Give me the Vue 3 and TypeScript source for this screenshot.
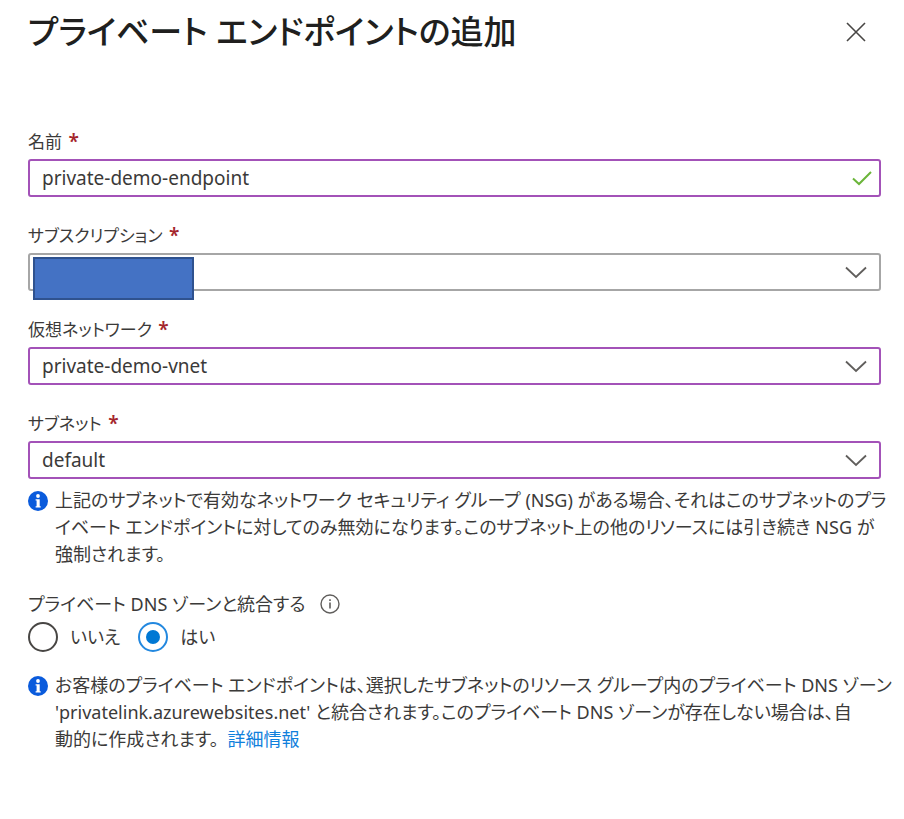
<script setup lang="ts">
import { reactive, ref } from 'vue'

interface SelectField {
  id: string
  label: string
  value: string
  edited: boolean
  masked: boolean
}

const name = ref('private-demo-endpoint')
const dnsIntegration = ref<'no' | 'yes'>('yes')

const selects = reactive<SelectField[]>([
  { id: 'subscription', label: 'サブスクリプション', value: '', edited: false, masked: true },
  { id: 'vnet', label: '仮想ネットワーク', value: 'private-demo-vnet', edited: true, masked: false },
  { id: 'subnet', label: 'サブネット', value: 'default', edited: true, masked: false },
])
</script>

<template>
  <main class="panel">
    <header class="header">
      <h1 class="title">プライベート エンドポイントの追加</h1>
      <button class="close" type="button" aria-label="閉じる">
        <svg width="20" height="20" viewBox="0 0 20 20" aria-hidden="true">
          <path d="M1 1 19 19M19 1 1 19" fill="none" stroke="#484644" stroke-width="1.6" />
        </svg>
      </button>
    </header>

    <form class="form" @submit.prevent>
      <div class="field">
        <label class="label" for="name">名前 <span class="required">*</span></label>
        <div class="control">
          <input id="name" v-model="name" class="box edited" type="text" required />
          <svg class="mark" width="22" height="22" viewBox="0 0 22 22" aria-hidden="true">
            <path d="M2 11.5 8 17 20 5" fill="none" stroke="#6bb53a" stroke-width="2" />
          </svg>
        </div>
      </div>

      <div v-for="field in selects" :key="field.id" class="field">
        <label class="label" :for="field.id">{{ field.label }} <span class="required">*</span></label>
        <div class="control">
          <select :id="field.id" v-model="field.value" class="box" :class="{ edited: field.edited }" required>
            <option :value="field.value">{{ field.value }}</option>
          </select>
          <svg class="mark" width="22" height="22" viewBox="0 0 22 22" aria-hidden="true">
            <path d="M1 6.500 11 16 21 6.500" fill="none" stroke="#605e5c" stroke-width="1.8" />
          </svg>
          <span v-if="field.masked" class="mask"></span>
        </div>
      </div>

      <div class="note">
        <svg class="note-icon" width="20" height="20" viewBox="0 0 20 20" aria-hidden="true">
          <circle cx="10" cy="10" r="10" fill="#0a5bdc" />
          <circle cx="10" cy="5" r="1.900" fill="#fff" />
          <path d="M7.600 8.200h4.100v7h1v1.300H7.600v-1.300h1V9.500h-1z" fill="#fff" />
        </svg>
        <p class="note-text">
          上記のサブネットで有効なネットワーク セキュリティ グループ (NSG) がある場合、それはこのサブネットのプラ<br />イベート エンドポイントに対してのみ無効になります。このサブネット上の他のリソースには引き続き NSG が<br />強制されます。
        </p>
      </div>

      <fieldset class="dns">
        <legend class="label dns-label">
          プライベート DNS ゾーンと統合する
          <svg class="hint" width="20" height="20" viewBox="0 0 20 20" aria-hidden="true">
            <circle cx="10" cy="10" r="9" fill="none" stroke="#605e5c" stroke-width="1.400" />
            <path d="M10 8.500v6M10 5.200v1.800" fill="none" stroke="#605e5c" stroke-width="1.600" />
          </svg>
        </legend>
        <div class="choices">
          <label class="choice"><input v-model="dnsIntegration" class="radio" type="radio" name="dns" value="no" />いいえ</label>
          <label class="choice"><input v-model="dnsIntegration" class="radio" type="radio" name="dns" value="yes" />はい</label>
        </div>
      </fieldset>

      <div class="note">
        <svg class="note-icon" width="20" height="20" viewBox="0 0 20 20" aria-hidden="true">
          <circle cx="10" cy="10" r="10" fill="#0a5bdc" />
          <circle cx="10" cy="5" r="1.900" fill="#fff" />
          <path d="M7.600 8.200h4.100v7h1v1.300H7.600v-1.300h1V9.500h-1z" fill="#fff" />
        </svg>
        <p class="note-text">
          お客様のプライベート エンドポイントは、選択したサブネットのリソース グループ内のプライベート DNS ゾーン<br />'privatelink.azurewebsites.net' と統合されます。このプライベート DNS ゾーンが存在しない場合は、自<br />動的に作成されます。<a class="link" href="#">詳細情報</a>
        </p>
      </div>
    </form>
  </main>
</template>

<style>
body {
  margin: 0;
  background: #fff;
}
</style>

<style scoped>
.panel {
  box-sizing: border-box;
  padding: 0 23px 40px 28px;
  color: #3b3a39;
  font-family: "Noto Sans", "Noto Sans CJK JP", sans-serif;
  font-size: 18px;
  font-feature-settings: "palt";
}

.header {
  display: flex;
  align-items: center;
  justify-content: space-between;
  height: 64px;
  padding-right: 11px;
}

.title {
  margin: 0;
  color: #201f1e;
  font-size: 33px;
  font-weight: 500;
  line-height: 64px;
  white-space: nowrap;
}

.close {
  display: flex;
  padding: 4px;
  border: 0;
  background: none;
}

.form {
  padding-top: 63px;
}

.field {
  margin-bottom: 24px;
}

.label {
  display: block;
  height: 28px;
  margin-bottom: 4px;
  line-height: 28px;
}

.field .label {
  font-size: 17px;
}

.required {
  margin-left: 2px;
  color: #a4262c;
  font-size: 19px;
  font-weight: 600;
}

.control {
  position: relative;
}

.box {
  display: block;
  box-sizing: border-box;
  width: 100%;
  height: 38px;
  margin: 0;
  padding: 0 44px 0 12px;
  border: 2px solid #a6a6a6;
  border-radius: 3px;
  background: #fff;
  color: #3b3a39;
  font-family: inherit;
  font-size: 19px;
  appearance: none;
  outline: none;
}

.edited {
  border-color: #a352b8;
}

.mark {
  position: absolute;
  top: 8px;
  right: 8px;
  pointer-events: none;
}

select + .mark {
  right: 14px;
}

.mask {
  position: absolute;
  top: 4px;
  left: 5px;
  box-sizing: border-box;
  width: 161px;
  height: 43px;
  border: 2px solid #2f528f;
  background: #4472c4;
}

.note {
  display: flex;
  gap: 7px;
  margin-top: -16px;
}

.note-icon {
  flex: none;
  margin-top: 4px;
}

.note-text {
  margin: 0;
  line-height: 27px;
  white-space: nowrap;
}

.link {
  margin-left: 9px;
  color: #1080dc;
  text-decoration: none;
}

.dns {
  min-width: 0;
  margin: 22px 0 36px;
  padding: 0;
  border: 0;
}

.dns-label {
  display: flex;
  align-items: center;
  gap: 14px;
  padding: 0;
}

.choices {
  display: flex;
  gap: 18px;
}

.choice {
  display: flex;
  align-items: center;
  gap: 12px;
  line-height: 30px;
}

.radio {
  display: grid;
  place-content: center;
  box-sizing: border-box;
  width: 30px;
  height: 30px;
  margin: 0;
  border: 2px solid #484644;
  border-radius: 50%;
  background: #fff;
  appearance: none;
}

.radio:checked {
  border-color: #2388df;
}

.radio:checked::before {
  width: 14px;
  height: 14px;
  border-radius: 50%;
  background: #0078d4;
  content: "";
}
</style>
